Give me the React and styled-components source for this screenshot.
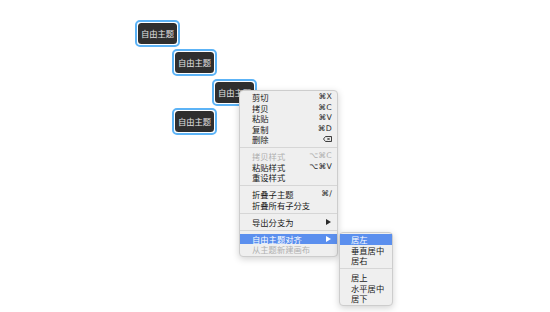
import React from "react";
import styled, { createGlobalStyle } from "styled-components";

const Global = createGlobalStyle`
  html, body { margin: 0; padding: 0; background: #ffffff; }
  body { font-family: "Noto Sans CJK SC", "Noto Sans", sans-serif; }
`;

const Canvas = styled.div`
  position: relative;
  width: 550px;
  height: 312px;
  overflow: hidden;
  background: #ffffff;
`;

const Topic = styled.div`
  position: absolute;
  box-sizing: border-box;
  width: 45px;
  height: 27px;
  border: 2px solid #5cb3f6;
  border-radius: 5px;
  padding: 0.75px;
  background: #ffffff;
  display: flex;
`;

const TopicInner = styled.div`
  flex: 1;
  background: #2f2f2f;
  border-radius: 3.5px;
  color: #e2e2e2;
  font-size: 8.3px;
  line-height: 1;
  display: flex;
  align-items: center;
  justify-content: center;
  white-space: nowrap;
`;

const Menu = styled.div`
  position: absolute;
  box-sizing: border-box;
  background: #efefef;
  border: 1px solid #cdcdcd;
  border-radius: 4px;
  box-shadow: 0 2px 7px rgba(0, 0, 0, 0.18);
  display: flex;
  flex-direction: column;
  padding: ${(p) => p.$pad};
  z-index: ${(p) => p.$z || 1};
`;

const Row = styled.div`
  height: 10.5px;
  display: flex;
  align-items: center;
  justify-content: space-between;
  padding: 0 ${(p) => p.$pr}px 0 ${(p) => p.$pl}px;
  font-size: 8.3px;
  line-height: 10.5px;
  white-space: nowrap;
  color: ${(p) => (p.$active ? "#ffffff" : p.$disabled ? "#b0b0b0" : "#1a1a1a")};
  background: ${(p) => (p.$active ? "#5b8fee" : "transparent")};
`;

const Shortcut = styled.span`
  font-family: "DejaVu Sans", "Noto Sans", sans-serif;
  font-size: 7.8px;
  letter-spacing: 0.2px;
  color: ${(p) => (p.$disabled ? "#b0b0b0" : "#2a2a2a")};
  display: flex;
  align-items: center;
`;

const Sep = styled.div`
  height: 1px;
  margin: 2.75px 0;
  background: #d6d6d6;
`;

const Arrow = ({ color }) => (
  <svg width="5" height="6" viewBox="0 0 5 6" style={{ marginRight: 1 }}>
    <path d="M0 0 L5 3 L0 6 Z" fill={color} />
  </svg>
);

const DeleteIcon = () => (
  <svg width="9" height="6" viewBox="0 0 9 6">
    <path d="M2.5 0.5 H8.5 V5.5 H2.5 L0.5 3 Z" fill="none" stroke="#2a2a2a" strokeWidth="0.9" />
    <path d="M4.3 1.8 L6.7 4.2 M6.7 1.8 L4.3 4.2" stroke="#2a2a2a" strokeWidth="0.9" />
  </svg>
);

const topics = [
  { x: 135, y: 20 },
  { x: 172, y: 49 },
  { x: 212, y: 79 },
  { x: 172, y: 108 },
];

const mainItems = [
  { t: "剪切", k: "⌘X" },
  { t: "拷贝", k: "⌘C" },
  { t: "粘贴", k: "⌘V" },
  { t: "复制", k: "⌘D" },
  { t: "删除", del: true },
  "sep",
  { t: "拷贝样式", k: "⌥⌘C", disabled: true },
  { t: "粘贴样式", k: "⌥⌘V" },
  { t: "重设样式" },
  "sep",
  { t: "折叠子主题", k: "⌘/" },
  { t: "折叠所有子分支" },
  "sep",
  { t: "导出分支为", arrow: true },
  "sep",
  { t: "自由主题对齐", arrow: true, active: true },
  { t: "从主题新建画布", disabled: true },
];

const subItems = [
  { t: "居左", active: true },
  { t: "垂直居中" },
  { t: "居右" },
  "sep",
  { t: "居上" },
  { t: "水平居中" },
  { t: "居下" },
];

export default function App() {
  return (
    <>
      <Global />
      <Canvas>
        {topics.map((p, i) => (
          <Topic key={i} style={{ left: p.x, top: p.y }}>
            <TopicInner>自由主题</TopicInner>
          </Topic>
        ))}
        <Menu $pad="1px 0 1.5px" style={{ left: 239, top: 90, width: 99 }}>
          {mainItems.map((it, i) =>
            it === "sep" ? (
              <Sep key={i} />
            ) : (
              <Row key={i} $pl={12} $pr={5} $active={it.active} $disabled={it.disabled}>
                <span>{it.t}</span>
                {it.k && <Shortcut $disabled={it.disabled}>{it.k}</Shortcut>}
                {it.del && (
                  <Shortcut>
                    <DeleteIcon />
                  </Shortcut>
                )}
                {it.arrow && <Arrow color={it.active ? "#ffffff" : "#2a2a2a"} />}
              </Row>
            )
          )}
        </Menu>
        <Menu $pad="1px 0 1.5px" $z={2} style={{ left: 339, top: 232, width: 54 }}>
          {subItems.map((it, i) =>
            it === "sep" ? (
              <Sep key={i} />
            ) : (
              <Row key={i} $pl={11} $pr={4} $active={it.active}>
                <span>{it.t}</span>
              </Row>
            )
          )}
        </Menu>
      </Canvas>
    </>
  );
}
